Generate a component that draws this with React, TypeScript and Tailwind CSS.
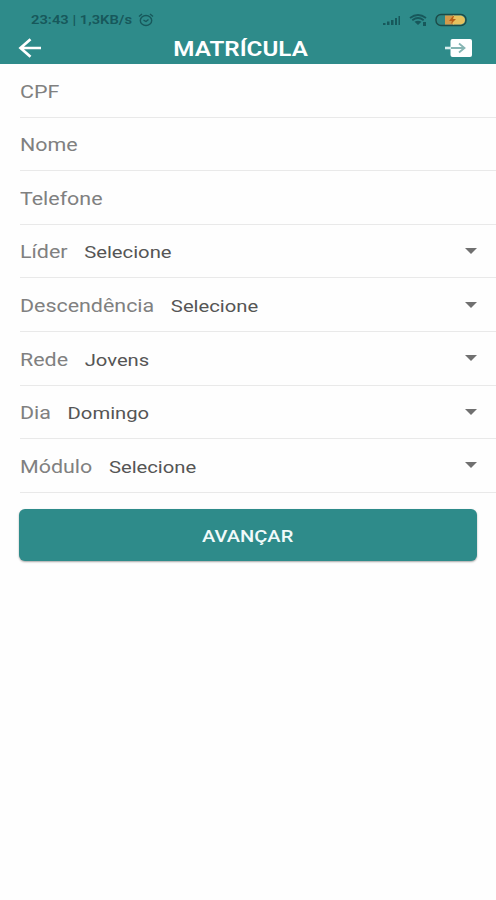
import { useState } from "react";

interface Field {
	label: string;
	value?: string;
}

const fields: Field[] = [
	{ label: "CPF" },
	{ label: "Nome" },
	{ label: "Telefone" },
	{ label: "Líder", value: "Selecione" },
	{ label: "Descendência", value: "Selecione" },
	{ label: "Rede", value: "Jovens" },
	{ label: "Dia", value: "Domingo" },
	{ label: "Módulo", value: "Selecione" },
];

const StatusBar = (): JSX.Element => (
	<div className="flex h-8 items-center justify-between pl-[31px] pr-[29px] pt-[7px] text-[#17585b]">
		<div className="flex items-center">
			<span className="w-[107px] whitespace-nowrap text-[12px] font-semibold leading-none">
				<span className="inline-block origin-left scale-x-[1.23]">
					23:43 | 1,3KB/s
				</span>
			</span>
			<svg width="16" height="14" viewBox="0 0 16 14" fill="none" stroke="currentColor" strokeWidth="1.4">
				<ellipse cx="8" cy="7.5" rx="5.7" ry="5" />
				<path d="M1 3.5 4 1M15 3.5 12 1M5.5 7.2 8 8.5 10.5 6.5" />
			</svg>
		</div>
		<div className="flex items-center">
			<svg width="18" height="12" viewBox="0 0 18 12" fill="currentColor">
				<path d="M0 9h2.5v2H0zM4 7.5h2.5V11H4zM8 6h2.5v5H8zM12 4h2v7h-2zM15.5 2H17v9h-1.5z" />
			</svg>
			<svg className="ml-2" width="19" height="14" viewBox="0 0 19 14" fill="currentColor">
				<path d="M9 12 5.5 8.8Q9 6.5 12.5 8.8z" />
				<path d="M1 5Q9-1 17 5M3.3 7.2Q9 2.8 14.7 7.2" fill="none" stroke="currentColor" strokeWidth="1.8" />
				<path d="M14 9h3v4h-3z" />
			</svg>
			<svg className="ml-[7px]" width="32" height="14" viewBox="0 0 32 14">
				<rect x="1" y="1.5" width="30" height="11" rx="5" fill="#2f8582" stroke="#1c4b48" strokeWidth="1.4" />
				<path d="M10 2.5h9v9h-9z" fill="#d39a4b" />
				<path d="M18 2.5h8q4 1 4 4.5t-4 4.5h-8z" fill="#e6c15e" />
				<path d="m18 3-4 5h3l-1 3 5-5h-3l1-3z" fill="#b95e17" />
			</svg>
		</div>
	</div>
);

const Header = (): JSX.Element => (
	<header className="h-16 bg-[#2e8b8a]">
		<StatusBar />
		<div className="flex h-8 items-center justify-between pl-[18px] pr-[24px] text-white">
			<button type="button" aria-label="Voltar">
				<svg width="24" height="20" viewBox="0 0 24 20" fill="none" stroke="currentColor" strokeWidth="2.7">
					<path d="M23 10H2.5M12.5 1.2 2.5 10l10 8.8" />
				</svg>
			</button>
			<h1 className="mr-[5px] scale-x-[1.21] pt-[2px] text-[20px] font-semibold leading-8">
				MATRÍCULA
			</h1>
			<button type="button" aria-label="Sair">
				<svg width="28" height="20" viewBox="0 0 28 20" fill="none">
					<rect x="6.5" y="1" width="21.5" height="18" rx="2" fill="white" />
					<path d="M1 10h6" stroke="#d9eeee" strokeWidth="2.6" />
					<path d="M7 10h12.5M15 5.5l5.5 4.5-5.5 4.5" stroke="#86b5b3" strokeWidth="1.8" />
				</svg>
			</button>
		</div>
	</header>
);

const FieldRow = (props: Field): JSX.Element => {
	const { label, value } = props;

	return (
		<div className="ml-5 flex h-[53.6px] items-center justify-between border-b border-[#e9e9e9] pr-[19px]">
			<div className="flex origin-left scale-x-[1.19] items-baseline gap-[14px] whitespace-nowrap pt-[2px]">
				<span className="text-[18px] text-[#808080]">{label}</span>
				{value && <span className="text-[17px] text-[#555555]">{value}</span>}
			</div>
			{value && (
				<svg width="12" height="6" viewBox="0 0 12 6" fill="#707070">
					<path d="M0 0h12L6 6z" />
				</svg>
			)}
		</div>
	);
};

const App = (): JSX.Element => {
	const [items] = useState<Field[]>(fields);

	return (
		<div className="min-h-screen bg-[#fefefe] font-[Roboto,sans-serif]">
			<Header />
			<form onSubmit={(e) => e.preventDefault()}>
				{items.map((field) => (
					<FieldRow key={field.label} label={field.label} value={field.value} />
				))}
				<div className="pl-[19px] pr-[19px] pt-4">
					<button
						type="submit"
						className="h-[52px] w-full rounded-md bg-[#2e8b8a] pt-[3px] text-[17px] font-medium text-[#f0fafa] shadow-[0_1px_2px_rgba(0,0,0,0.35)]"
					>
						<span className="inline-block scale-x-[1.18]">AVANÇAR</span>
					</button>
				</div>
			</form>
		</div>
	);
};

export default App;
